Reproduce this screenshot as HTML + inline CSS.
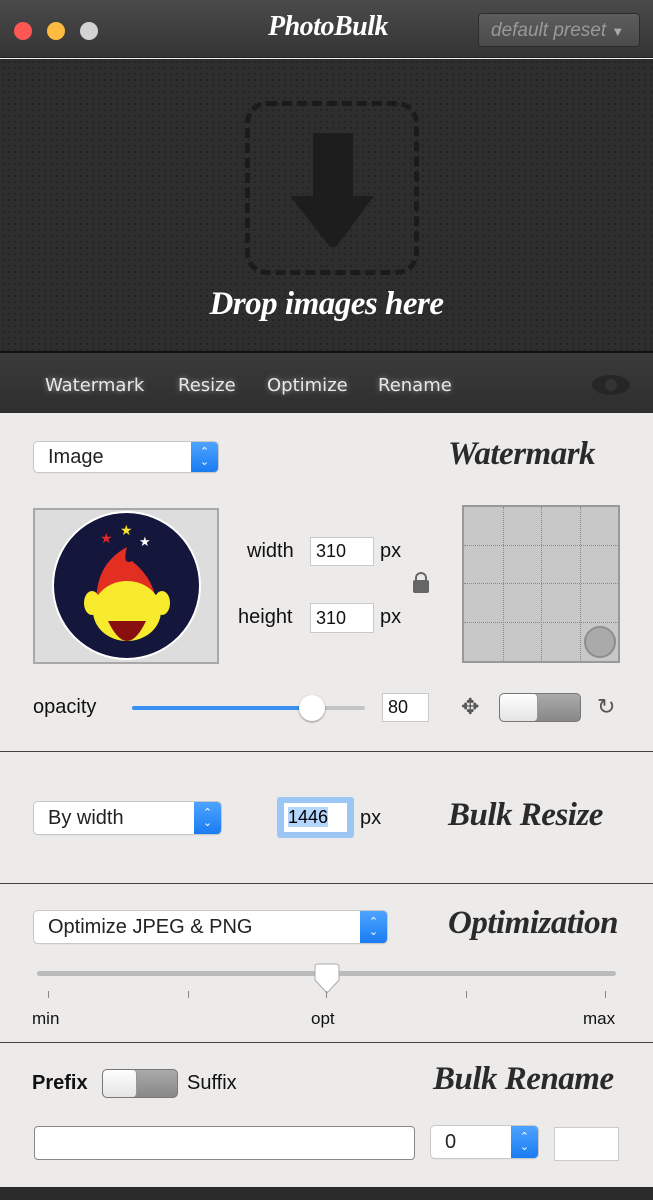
<!DOCTYPE html>
<html><head><meta charset="utf-8"><style>
*{box-sizing:border-box;margin:0;padding:0}
body{width:653px;height:1200px;overflow:hidden;font-family:"Liberation Sans",sans-serif;background:#ecebea;position:relative}
.a{position:absolute}
.script{font-family:"Liberation Serif",serif;font-style:italic;font-weight:bold;color:#2a2a2a;letter-spacing:-0.5px;white-space:nowrap}
.sel{position:absolute;background:#fff;border-radius:4px;box-shadow:0 0 0 1px #c8c8c8,0 1px 1px rgba(0,0,0,.2);font-size:20px;color:#222;padding-left:14px;display:flex;align-items:center}
.sel .arr{position:absolute;right:0;top:0;bottom:0;width:27px;background:linear-gradient(#4ea3ff,#1a7cf2);border-radius:0 4px 4px 0;color:#fff;font-size:11px;line-height:10px;display:flex;flex-direction:column;align-items:center;justify-content:center}
.inp{position:absolute;background:#fff;border:1px solid #c9c9c9;font-size:18px;color:#111;padding-left:5px;display:flex;align-items:center}
.lbl{position:absolute;font-size:20px;color:#111}
.hr{position:absolute;left:0;width:653px;height:1px;background:#444}
.tog{position:absolute;border:1px solid #777;border-radius:5px;background:linear-gradient(#aaa,#888);overflow:hidden}
.tog i{position:absolute;left:0;top:0;bottom:0;background:linear-gradient(#fff,#e4e4e4);border-right:1px solid #999;border-radius:4px}
</style></head><body>
<div class="a" style="left:0;top:0;width:653px;height:58px;background:linear-gradient(#4a4a4a,#353535);border-bottom:1px solid #222"></div>
<div class="a" style="left:14px;top:22px;width:18px;height:18px;border-radius:50%;background:#fc5753"></div>
<div class="a" style="left:47px;top:22px;width:18px;height:18px;border-radius:50%;background:#fdbc40"></div>
<div class="a" style="left:80px;top:22px;width:18px;height:18px;border-radius:50%;background:#d3d3d3"></div>
<div class="a script" style="left:268px;top:11px;font-size:28px;color:#fff">PhotoBulk</div>
<div class="a" style="left:478px;top:13px;width:162px;height:34px;border-radius:4px;background:linear-gradient(#5d5d5d,#4a4a4a);border:1px solid #2c2c2c;color:#999;font-size:19px;font-style:italic;padding:6px 0 0 12px;white-space:nowrap">default preset <span style="font-size:13px;font-style:normal;color:#aaa">▼</span></div>
<div class="a" style="left:0;top:59px;width:653px;height:292px;background-color:#2e2e2e;background-image:radial-gradient(#242424 1px,transparent 1.3px);background-size:6px 6px"></div>
<div class="a" style="left:245px;top:101px;width:174px;height:174px;border:5px dashed #1b1b1b;border-radius:22px"></div>
<svg class="a" style="left:0;top:0" width="653" height="300"><polygon points="313,133 353,133 353,196 374,196 336,247 330,247 290,196 313,196" fill="#1d1d1d"/></svg>
<div class="a script" style="left:0;width:653px;text-align:center;top:286px;font-size:33px;color:#fff">Drop images here</div>
<div class="a" style="left:0;top:351px;width:653px;height:2px;background:#111"></div>
<div class="a" style="left:0;top:353px;width:653px;height:60px;background:linear-gradient(#3a3a3a,#2e2e2e)"></div>
<div class="a" style="top:375px;left:45px;color:#e8e8e8;font-size:18px;font-family:'DejaVu Sans',sans-serif;text-shadow:0 0 6px rgba(255,255,255,.5)">Watermark</div>
<div class="a" style="top:375px;left:178px;color:#e8e8e8;font-size:18px;font-family:'DejaVu Sans',sans-serif;text-shadow:0 0 6px rgba(255,255,255,.5)">Resize</div>
<div class="a" style="top:375px;left:267px;color:#e8e8e8;font-size:18px;font-family:'DejaVu Sans',sans-serif;text-shadow:0 0 6px rgba(255,255,255,.5)">Optimize</div>
<div class="a" style="top:375px;left:378px;color:#e8e8e8;font-size:18px;font-family:'DejaVu Sans',sans-serif;text-shadow:0 0 6px rgba(255,255,255,.5)">Rename</div>
<div class="a" style="left:592px;top:375px;width:38px;height:20px;border-radius:50%;background:#262626"></div>
<div class="a" style="left:605px;top:379px;width:12px;height:12px;border-radius:50%;background:#333"></div>

<div class="sel" style="left:34px;top:442px;width:184px;height:30px">Image<div class="arr">⌃<br>⌄</div></div>
<div class="a script" style="left:448px;top:436px;font-size:33px">Watermark</div>
<div class="a" style="left:33px;top:508px;width:186px;height:156px;background:#ddd;border:2px solid #a8a8a8"></div>
<div class="a" style="left:52px;top:511px;width:149px;height:149px;border-radius:50%;background:#15163b;border:2px solid #fff"></div>
<svg class="a" style="left:52px;top:511px" width="149" height="149">
<text x="48" y="32" fill="#e02828" font-size="14">★</text><text x="68" y="24" fill="#f5e52b" font-size="14">★</text><text x="87" y="35" fill="#fff" font-size="13">★</text>
<path d="M45 100 Q40 55 75 36 Q70 55 80 50 Q105 70 105 100 Z" fill="#e32f22"/>
<ellipse cx="75" cy="100" rx="34" ry="30" fill="#f8ea2d"/><ellipse cx="40" cy="92" rx="8" ry="12" fill="#f8ea2d"/><ellipse cx="110" cy="92" rx="8" ry="12" fill="#f8ea2d"/>
<path d="M56 110 Q75 150 94 110 Z" fill="#8a1010"/></svg>
<div class="lbl" style="left:247px;top:540px">width</div>
<div class="inp" style="left:310px;top:537px;width:64px;height:29px">310</div>
<div class="lbl" style="left:380px;top:540px">px</div>
<div class="lbl" style="left:238px;top:606px">height</div>
<div class="inp" style="left:310px;top:603px;width:64px;height:30px">310</div>
<div class="lbl" style="left:380px;top:606px">px</div>
<div class="a" style="left:415px;top:572px;width:12px;height:10px;border:2px solid #666;border-bottom:none;border-radius:6px 6px 0 0"></div>
<div class="a" style="left:413px;top:580px;width:16px;height:13px;background:#666;border-radius:2px"></div>
<div class="a" style="left:462px;top:505px;width:158px;height:158px;background:#c8c8c8;border:2px solid #999"></div>
<div class="a" style="left:503px;top:507px;height:154px;border-left:1px dotted #888"></div>
<div class="a" style="left:541px;top:507px;height:154px;border-left:1px dotted #888"></div>
<div class="a" style="left:580px;top:507px;height:154px;border-left:1px dotted #888"></div>
<div class="a" style="left:464px;top:545px;width:154px;border-top:1px dotted #888"></div>
<div class="a" style="left:464px;top:583px;width:154px;border-top:1px dotted #888"></div>
<div class="a" style="left:464px;top:622px;width:154px;border-top:1px dotted #888"></div>
<div class="a" style="left:584px;top:626px;width:32px;height:32px;border-radius:50%;background:#aaa;border:2px solid #8e8e8e"></div>
<div class="lbl" style="left:33px;top:696px">opacity</div>
<div class="a" style="left:132px;top:706px;width:233px;height:4px;border-radius:2px;background:#c4c4c4"></div>
<div class="a" style="left:132px;top:706px;width:180px;height:4px;border-radius:2px;background:#3a8ff2"></div>
<div class="a" style="left:299px;top:695px;width:26px;height:26px;border-radius:50%;background:#fff;box-shadow:0 1px 2px rgba(0,0,0,.4)"></div>
<div class="inp" style="left:382px;top:693px;width:47px;height:29px">80</div>
<div class="a" style="left:461px;top:694px;font-size:22px;color:#555">✥</div>
<div class="tog" style="left:499px;top:693px;width:82px;height:29px"><i style="width:38px"></i></div>
<div class="a" style="left:597px;top:694px;font-size:22px;color:#555">↻</div>
<div class="hr" style="top:751px"></div>

<div class="sel" style="left:34px;top:802px;width:187px;height:32px">By width<div class="arr">⌃<br>⌄</div></div>
<div class="a" style="left:277px;top:797px;width:77px;height:41px;border-radius:3px;background:#9cc6f5"></div>
<div class="a" style="left:284px;top:803px;width:63px;height:29px;background:#fff;font-size:18px;padding:4px 0 0 4px"><span style="background:#b4d6fd">1446</span></div>
<div class="lbl" style="left:360px;top:807px">px</div>
<div class="a script" style="left:448px;top:797px;font-size:33px">Bulk Resize</div>
<div class="hr" style="top:883px"></div>

<div class="sel" style="left:34px;top:911px;width:353px;height:32px">Optimize JPEG &amp; PNG<div class="arr">⌃<br>⌄</div></div>
<div class="a script" style="left:448px;top:905px;font-size:33px">Optimization</div>
<div class="a" style="left:37px;top:971px;width:579px;height:5px;border-radius:3px;background:#bbb"></div>
<svg class="a" style="left:313px;top:963px" width="28" height="32"><path d="M2 4Q2 1 5 1H23Q26 1 26 4V17L14 30 2 17Z" fill="#fff" stroke="#aaa"/></svg>
<div class="a" style="left:48px;top:991px;width:1px;height:7px;background:#888"></div>
<div class="a" style="left:188px;top:991px;width:1px;height:7px;background:#888"></div>
<div class="a" style="left:326px;top:991px;width:1px;height:7px;background:#888"></div>
<div class="a" style="left:466px;top:991px;width:1px;height:7px;background:#888"></div>
<div class="a" style="left:605px;top:991px;width:1px;height:7px;background:#888"></div>
<div class="a" style="left:32px;top:1009px;font-size:17px;color:#111">min</div>
<div class="a" style="left:311px;top:1009px;font-size:17px;color:#111">opt</div>
<div class="a" style="left:583px;top:1009px;font-size:17px;color:#111">max</div>
<div class="hr" style="top:1042px"></div>

<div class="lbl" style="left:32px;top:1072px;font-weight:bold">Prefix</div>
<div class="tog" style="left:102px;top:1069px;width:76px;height:29px"><i style="width:34px"></i></div>
<div class="lbl" style="left:187px;top:1072px">Suffix</div>
<div class="a script" style="left:433px;top:1061px;font-size:33px">Bulk Rename</div>
<div class="a" style="left:34px;top:1126px;width:381px;height:34px;background:#fff;border:1px solid #888;border-radius:4px"></div>
<div class="sel" style="left:431px;top:1126px;width:107px;height:32px">0<div class="arr">⌃<br>⌄</div></div>
<div class="a" style="left:554px;top:1127px;width:65px;height:34px;background:#fff;border:1px solid #ccc"></div>
<div class="a" style="left:0;top:1187px;width:653px;height:13px;background:#2b2b2b"></div>
</body></html>
